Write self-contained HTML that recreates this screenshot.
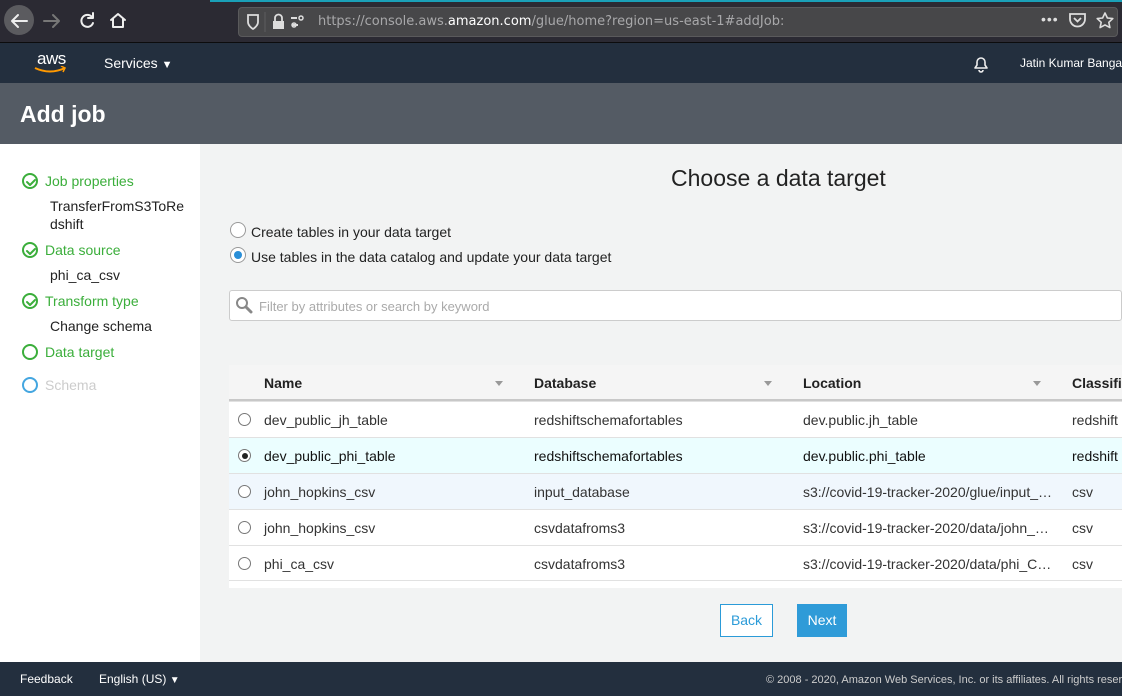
<!DOCTYPE html>
<html><head><style>
*{box-sizing:border-box;margin:0;padding:0}
body{width:1122px;height:696px;overflow:hidden;font-family:"Liberation Sans",Arial,sans-serif;background:#f2f3f3;position:relative;font-size:14px;color:#333}
.abs{position:absolute}
#chrome{left:0;top:0;width:1122px;height:43px;background:#2b2a33;border-bottom:1px solid #0c0c0d}
#teal{left:210px;top:0;width:912px;height:2px;background:#1aa0b8}
#url{left:238px;top:7px;width:880px;height:30px;background:#474749;border:1px solid #5a5a5c;border-radius:4px}
#nav{left:0;top:43px;width:1122px;height:40px;background:#232f3e}
#hdr{left:0;top:83px;width:1122px;height:61px;background:#545b64}
#side{left:0;top:144px;width:200px;height:518px;background:#fff}
.step{position:absolute;left:22px;font-size:14px;color:#3bae3b;display:flex;align-items:center}
.step i{display:inline-block;width:16px;height:16px;border:2px solid #3bae3b;border-radius:50%;margin-right:7px;position:relative}
.sub{position:absolute;left:50px;font-size:14px;color:#222;line-height:18px}
.radio{display:inline-block;width:14px;height:14px;border:1px solid #777;border-radius:50%;background:#fff;position:absolute}
#tbl{left:229px;top:365px;width:893px;height:223px;background:#fff}
.th{position:absolute;top:0;height:36px;line-height:36px;font-weight:bold;font-size:14px;color:#222}
.row{position:absolute;left:0;width:893px;height:36px;border-top:1px solid #e1e1e1;font-size:14px;line-height:36px;color:#333}
.row span{position:absolute}
.arr{position:absolute;top:16px;width:0;height:0;border-left:4px solid transparent;border-right:4px solid transparent;border-top:5px solid #999}
#foot{left:0;top:662px;width:1122px;height:34px;background:#232f3e;color:#fff}
</style></head><body>
<div id="chrome" class="abs"></div>
<div id="teal" class="abs"></div>
<div class="abs" style="left:4px;top:5px;width:30px;height:30px;border-radius:50%;background:#5b5b5f"></div>
<svg class="abs" style="left:0;top:0" width="140" height="43"><g fill="none" stroke-width="2" stroke-linecap="round" stroke-linejoin="round"><path d="M27 21H12M18 15l-6 6 6 6" stroke="#eee"/><path d="M59 21H44M53 15l6 6-6 6" stroke="#777"/><path d="M92 17a6 6 0 1 0 1 6" stroke="#eee"/><path d="M93 13v5h-5" stroke="#eee"/><path d="M111 20l7-6 7 6M113 19v8h10v-8" stroke="#eee"/></g></svg>
<div id="url" class="abs"></div>
<svg class="abs" style="left:244px;top:12px" width="80" height="20"><path d="M4 3h10v7c0 4-5 7-5 7s-5-3-5-7z" fill="none" stroke="#ddd" stroke-width="1.8"/><line x1="21" y1="0" x2="21" y2="20" stroke="#5e5e60"/><rect x="29" y="9" width="11" height="8" fill="#ddd"/><path d="M31 9V6a3.5 3.5 0 0 1 7 0v3" fill="none" stroke="#ddd" stroke-width="1.8"/><path d="M47 6h6M48 13h6" stroke="#ddd" stroke-width="2"/><circle cx="57" cy="6" r="2" fill="none" stroke="#ddd" stroke-width="1.5"/><circle cx="50" cy="13" r="2" fill="none" stroke="#ddd" stroke-width="1.5"/></svg>
<div class="abs" style="left:318px;top:14px;font-size:14px;color:#a8a8aa;font-family:'DejaVu Sans',sans-serif;font-size:13px">https://console.aws.<span style="color:#fff">amazon.com</span>/glue/home?region=us-east-1#addJob:</div>
<div class="abs" style="left:1041px;top:11px;color:#ddd;font-size:14px;letter-spacing:1px">•••</div>
<svg class="abs" style="left:1068px;top:10px" width="50" height="22"><path d="M2 4h15v5a7.5 7.5 0 0 1-15 0z" fill="none" stroke="#ddd" stroke-width="1.8"/><path d="M6 8l3.5 3.5L13 8" fill="none" stroke="#ddd" stroke-width="1.8"/><path d="M37 3l2.4 5 5.4.6-4 3.7 1.1 5.3-4.9-2.7-4.9 2.7 1.1-5.3-4-3.7 5.4-.6z" fill="none" stroke="#ddd" stroke-width="1.6" stroke-linejoin="round"/></svg>
<div id="nav" class="abs"></div>
<div class="abs" style="left:37px;top:49px;color:#fff;font-size:17px;letter-spacing:-0.5px">aws</div>
<svg class="abs" style="left:34px;top:66px" width="34" height="9"><path d="M1 2q15 7 30 0" fill="none" stroke="#f90" stroke-width="2"/><path d="M27 0l4 2-2 4" fill="none" stroke="#f90" stroke-width="1.5"/></svg>
<div class="abs" style="left:104px;top:55px;color:#fff;font-size:14px">Services <span style="font-size:11px">▼</span></div>
<svg class="abs" style="left:972px;top:55px" width="18" height="18"><path d="M3 13h12l-2-3V7a4 4 0 0 0-8 0v3z" fill="none" stroke="#eee" stroke-width="1.6" stroke-linejoin="round"/><path d="M7 15a2 2 0 0 0 4 0" fill="none" stroke="#eee" stroke-width="1.6"/></svg>
<div class="abs" style="left:1020px;top:56px;color:#fff;font-size:12px;white-space:nowrap">Jatin Kumar Banga</div>
<div id="hdr" class="abs"></div>
<div class="abs" style="left:20px;top:101px;color:#fff;font-size:23px;font-weight:bold">Add job</div>
<div id="side" class="abs"></div>
<svg width="0" height="0" style="position:absolute"></svg>
<div class="step" style="top:173px"><i></i>Job properties</div>
<div class="sub" style="top:197px">TransferFromS3ToRe<br>dshift</div>
<div class="step" style="top:242px"><i></i>Data source</div>
<div class="sub" style="top:266px">phi_ca_csv</div>
<div class="step" style="top:293px"><i></i>Transform type</div>
<div class="sub" style="top:317px">Change schema</div>
<div class="step" style="top:344px"><i></i>Data target</div>
<div class="step" style="top:377px;color:#ccc"><i style="border-color:#44a6e0"></i>Schema</div>
<svg class="abs" style="left:22px;top:173px" width="18" height="140"><g fill="none" stroke="#3bae3b" stroke-width="2" stroke-linecap="round" stroke-linejoin="round"><path d="M5 9l3 3 5-5"/><path d="M5 78l3 3 5-5"/><path d="M5 129l3 3 5-5"/></g></svg>
<div class="abs" style="left:671px;top:165px;font-size:23px;color:#222">Choose a data target</div>
<span class="radio" style="left:230px;top:222px;width:16px;height:16px;border-color:#999"></span>
<div class="abs" style="left:251px;top:224px;color:#222">Create tables in your data target</div>
<span class="radio" style="left:230px;top:247px;width:16px;height:16px;border-color:#999"></span>
<div class="abs" style="left:234px;top:251px;width:8px;height:8px;border-radius:50%;background:#2a8fd8"></div>
<div class="abs" style="left:251px;top:249px;color:#222">Use tables in the data catalog and update your data target</div>
<div class="abs" style="left:229px;top:290px;width:893px;height:31px;background:#fff;border:1px solid #ccc;border-radius:3px"></div>
<svg class="abs" style="left:235px;top:296px" width="18" height="18"><circle cx="7" cy="7" r="5" fill="none" stroke="#888" stroke-width="2"/><path d="M11 11l5 5" stroke="#888" stroke-width="3" stroke-linecap="round"/></svg>
<div class="abs" style="left:259px;top:299px;color:#aaa;font-size:13px">Filter by attributes or search by keyword</div>
<div id="tbl" class="abs">
<div class="abs" style="left:0;top:0;width:893px;height:36px;background:#f5f5f5;border-bottom:2px solid #c8c8c8"></div>
<div class="th" style="left:35px">Name</div><div class="arr" style="left:266px"></div>
<div class="th" style="left:305px">Database</div><div class="arr" style="left:535px"></div>
<div class="th" style="left:574px">Location</div><div class="arr" style="left:804px"></div>
<div class="th" style="left:843px">Classifi</div>
<div class="row" style="top:36px"><span class="radio" style="left:9px;top:11px;width:13px;height:13px"></span><span style="left:35px">dev_public_jh_table</span><span style="left:305px">redshiftschemafortables</span><span style="left:574px">dev.public.jh_table</span><span style="left:843px">redshift</span></div>
<div class="row" style="top:72px;background:#ebfeff;color:#111"><span class="radio" style="left:9px;top:11px;width:13px;height:13px"></span><span style="left:12.5px;top:14.5px;width:6px;height:6px;border-radius:50%;background:#222"></span><span style="left:35px">dev_public_phi_table</span><span style="left:305px">redshiftschemafortables</span><span style="left:574px">dev.public.phi_table</span><span style="left:843px">redshift</span></div>
<div class="row" style="top:108px;background:#f0f7fd"><span class="radio" style="left:9px;top:11px;width:13px;height:13px"></span><span style="left:35px">john_hopkins_csv</span><span style="left:305px">input_database</span><span style="left:574px">s3://covid-19-tracker-2020/glue/input_…</span><span style="left:843px">csv</span></div>
<div class="row" style="top:144px"><span class="radio" style="left:9px;top:11px;width:13px;height:13px"></span><span style="left:35px">john_hopkins_csv</span><span style="left:305px">csvdatafroms3</span><span style="left:574px">s3://covid-19-tracker-2020/data/john_…</span><span style="left:843px">csv</span></div>
<div class="row" style="top:180px;border-bottom:1px solid #e1e1e1"><span class="radio" style="left:9px;top:11px;width:13px;height:13px"></span><span style="left:35px">phi_ca_csv</span><span style="left:305px">csvdatafroms3</span><span style="left:574px">s3://covid-19-tracker-2020/data/phi_C…</span><span style="left:843px">csv</span></div>
</div>
<div class="abs" style="left:720px;top:604px;width:53px;height:33px;border:1px solid #2b9bd8;background:#fff;color:#2b9bd8;text-align:center;line-height:31px">Back</div>
<div class="abs" style="left:797px;top:604px;width:50px;height:33px;background:#2f9bd8;color:#fff;text-align:center;line-height:33px">Next</div>
<div id="foot" class="abs"></div>
<div class="abs" style="left:20px;top:672px;color:#fff;font-size:12px">Feedback</div>
<div class="abs" style="left:99px;top:672px;color:#fff;font-size:12px">English (US) <span style="font-size:10px">▼</span></div>
<div class="abs" style="left:766px;top:674px;color:#ccc;font-size:11px;white-space:nowrap">© 2008 - 2020, Amazon Web Services, Inc. or its affiliates. All rights reserved.</div>
</body></html>
